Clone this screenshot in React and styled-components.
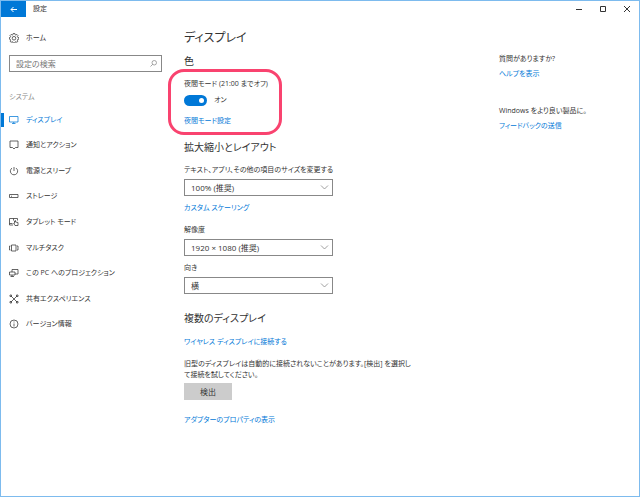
import React, { useState } from 'react';
import styled, { createGlobalStyle } from 'styled-components';

const GlobalStyle = createGlobalStyle`
  * {
    box-sizing: border-box;
  }

  body {
    margin: 0;
    background: #fff;
    color: #333;
    font-family: "Open Sans", "Noto Sans CJK JP", sans-serif;
    font-size: 7px;
    line-height: 12px;
    font-feature-settings: "palt";
  }

  button,
  input,
  select {
    margin: 0;
    font: inherit;
    font-feature-settings: inherit;
    color: inherit;
  }
`;

// === Window frame ===
const Window = styled.div`
  display: flex;
  flex-direction: column;
  min-height: 100vh;
  border: 1px solid #7dbbee;
`;

const TitleBar = styled.header`
  display: flex;
  align-items: center;
  height: 16px;
`;

const BackButton = styled.button`
  display: flex;
  align-items: center;
  justify-content: center;
  width: 25px;
  height: 16px;
  padding: 0;
  border: none;
  background: #0078d7;
  color: #fff;
`;

const WindowTitle = styled.span`
  flex: 1;
  padding-left: 7px;
`;

const WindowButton = styled.button`
  display: flex;
  align-items: center;
  justify-content: center;
  width: 24px;
  height: 16px;
  padding: 0;
  border: none;
  background: none;
`;

const Body = styled.div`
  flex: 1;
  display: grid;
  grid-template-columns: 161px minmax(0, 1fr) 140px;
`;

// === Sidebar ===
const Sidebar = styled.nav`
  padding-top: 14px;
`;

const NavLink = styled.a`
  display: flex;
  align-items: center;
  gap: 7px;
  min-height: 14px;
  padding-left: 7px;
  border-left: 3px solid ${({ $active }) => ($active ? '#0078d7' : 'transparent')};
  color: ${({ $active }) => ($active ? '#0078d7' : '#333')};
  text-decoration: none;

  svg {
    flex: none;
    margin-left: -2px;
  }
`;

const NavList = styled.ul`
  display: grid;
  grid-auto-rows: 1fr;
  align-items: center;
  height: 230px;
  margin: 4px 0 0;
  padding: 0;
  list-style: none;
`;

const SearchBox = styled.label`
  display: flex;
  align-items: center;
  height: 17px;
  margin: 10px 0 0 8px;
  padding: 0 4px 0 6px;
  border: 1px solid #888;
  color: #888;
`;

const SearchInput = styled.input`
  flex: 1;
  min-width: 0;
  padding: 0;
  border: none;
  outline: none;
  background: none;
  font-size: 8px;

  &::placeholder {
    color: #777;
    opacity: 1;
  }
`;

const GroupTitle = styled.div`
  margin: 19px 0 0 8px;
  color: #888;
`;

// === Content ===
const Main = styled.main`
  padding: 10px 83px 20px 22px;
`;

const PageTitle = styled.h1`
  margin: 0;
  font-size: 12px;
  font-weight: 400;
  line-height: 22px;
`;

const SectionTitle = styled.h2`
  margin: ${({ $top }) => $top}px 0 0;
  font-size: 10px;
  font-weight: 400;
  line-height: 16px;
`;

const NightMode = styled.div`
  position: relative;
  width: fit-content;
  margin-top: 9px;
`;

const Marker = styled.div`
  position: absolute;
  inset: -9px -14px -8px -16px;
  border: 3px solid #f9436f;
  border-radius: 16px;
  pointer-events: none;
`;

const SwitchRow = styled.label`
  display: flex;
  align-items: center;
  gap: 7px;
  height: 12px;
  margin-top: 4px;
`;

const Switch = styled.input`
  appearance: none;
  display: flex;
  align-items: center;
  justify-content: ${({ checked }) => (checked ? 'flex-end' : 'flex-start')};
  width: 23px;
  height: 11px;
  padding: 0 3px;
  border-radius: 6px;
  background: ${({ checked }) => (checked ? '#0078d7' : '#999')};

  &::after {
    content: "";
    width: 5px;
    height: 5px;
    border-radius: 50%;
    background: #fff;
  }
`;

const TextLink = styled.a`
  display: block;
  width: fit-content;
  margin-top: ${({ $top }) => $top}px;
  color: #0078d7;
  text-decoration: none;
`;

const Label = styled.label`
  display: block;
  margin-top: ${({ $top }) => $top || 0}px;
`;

const SelectWrap = styled.div`
  position: relative;
  width: 149px;
  margin-top: 3px;

  svg {
    position: absolute;
    top: 4px;
    right: 4px;
    pointer-events: none;
  }
`;

const Select = styled.select`
  appearance: none;
  display: block;
  width: 100%;
  height: 17px;
  padding: 0 16px 0 6px;
  border: 1px solid #888;
  border-radius: 0;
  background: #fff;
  font-size: 8px;
`;

const Paragraph = styled.p`
  margin: 10px 0 0;
  line-height: 11px;
`;

const DetectButton = styled.button`
  display: block;
  width: 48px;
  height: 17px;
  margin-top: 3px;
  padding: 0;
  border: none;
  background: #ccc;
  font-size: 8px;
`;

// === Help column ===
const Aside = styled.aside`
  padding-top: 36px;
`;

const HelpBlock = styled.section`
  margin-bottom: 25px;
`;

const Icon = ({ size = 10, children }) => (
  <svg
    width={size}
    height={size}
    viewBox="0 0 20 20"
    fill="none"
    stroke="currentColor"
    strokeWidth="1.5"
    aria-hidden="true"
  >
    {children}
  </svg>
);

const icons = {
  home: (
    <>
      <path d="M8.4 1h3.2l.5 2.4 1.6.7 2-1.3 2.3 2.3-1.3 2 .7 1.5 2.4.5v3.2l-2.4.5-.7 1.6 1.3 2-2.3 2.2-2-1.3-1.6.7-.5 2.4H8.4l-.5-2.4-1.6-.7-2 1.3L2 16.4l1.3-2-.7-1.6L.8 12.3V9.1l1.800-.5.7-1.500L2 5.100l2.300-2.300 2 1.300 1.600-.7z" />
      <circle cx="10" cy="10.500" r="3.600" />
    </>
  ),
  display: <path d="M1 3h17v11H1zM9.500 14v3M6 17h7" />,
  notify: <path d="M2 2h16v13h-5l-3 3-3-3H2z" />,
  power: <path d="M10 2v8M6 4.200a7.300 7.300 0 1 0 8 0" />,
  storage: <path d="M1 7h17v6H1zM4 10.500h2" />,
  tablet: (
    <>
      <path d="M8 16H1V3h16v4M1 13h6M9 3v4" />
      <path d="M9 12l3 5h6v-6l-5-1V7l-2 1v5" />
    </>
  ),
  multitask: <path d="M5 4h9v12H5zM3 6H1v8h2M16 6h2v8h-2" />,
  project: <path d="M6 8V3h12v9h-6M1 8h11v6H1zM6 14v3M3 17h7" />,
  share: (
    <>
      <path d="M4 4l12 12M16 4L4 16" />
      <path d="M2 2h3v3H2zM15 2h3v3h-3zM2 15h3v3H2zM15 15h3v3h-3z" />
    </>
  ),
  info: (
    <>
      <circle cx="10" cy="10" r="8" />
      <path d="M10 9v6M10 5v2" />
    </>
  ),
};

const navItems = [
  ['display', 'ディスプレイ'],
  ['notify', '通知とアクション'],
  ['power', '電源とスリープ'],
  ['storage', 'ストレージ'],
  ['tablet', 'タブレット モード'],
  ['multitask', 'マルチタスク'],
  ['project', 'この PC へのプロジェクション'],
  ['share', '共有エクスペリエンス'],
  ['info', 'バージョン情報'],
];

const Dropdown = ({ id, label, top, value }) => (
  <>
    <Label htmlFor={id} $top={top}>{label}</Label>
    <SelectWrap>
      <Select id={id} defaultValue={value}>
        <option>{value}</option>
      </Select>
      <svg width="9" height="9" viewBox="0 0 18 18" fill="none" stroke="#888" strokeWidth="1.6">
        <path d="M2 5l7 7 7-7" />
      </svg>
    </SelectWrap>
  </>
);

const App = () => {
  const [active, setActive] = useState('display');
  const [night, setNight] = useState(true);

  return (
    <>
      <GlobalStyle />
      <Window>
        <TitleBar>
          <BackButton aria-label="戻る">
            <svg width="7" height="7" viewBox="0 0 14 14" fill="none" stroke="currentColor" strokeWidth="2">
              <path d="M14 7H2M7 2L2 7l5 5" />
            </svg>
          </BackButton>
          <WindowTitle>設定</WindowTitle>
          <WindowButton aria-label="最小化">
            <svg width="6" height="6" viewBox="0 0 6 6" stroke="#333">
              <path d="M0 3.500h6" />
            </svg>
          </WindowButton>
          <WindowButton aria-label="最大化">
            <svg width="6" height="6" viewBox="0 0 6 6" fill="none" stroke="#333">
              <path d="M.5.5h5v5h-5z" />
            </svg>
          </WindowButton>
          <WindowButton aria-label="閉じる">
            <svg width="6" height="6" viewBox="0 0 6 6" stroke="#333">
              <path d="M0 0l6 6M6 0L0 6" />
            </svg>
          </WindowButton>
        </TitleBar>

        <Body>
          {/* Sidebar */}
          <Sidebar>
            <NavLink href="#home">
              <Icon>{icons.home}</Icon>
              ホーム
            </NavLink>
            <SearchBox>
              <SearchInput type="text" placeholder="設定の検索" aria-label="設定の検索" />
              <svg width="7" height="7" viewBox="0 0 14 14" fill="none" stroke="currentColor" strokeWidth="1.500">
                <circle cx="8.500" cy="5.500" r="4.500" />
                <path d="M5.500 8.500L1 13" />
              </svg>
            </SearchBox>
            <GroupTitle>システム</GroupTitle>
            <NavList>
              {navItems.map(([key, label]) => (
                <li key={key}>
                  <NavLink href={`#${key}`} $active={active === key} onClick={() => setActive(key)}>
                    <Icon>{icons[key]}</Icon>
                    {label}
                  </NavLink>
                </li>
              ))}
            </NavList>
          </Sidebar>

          {/* Content */}
          <Main>
            <PageTitle>ディスプレイ</PageTitle>
            <SectionTitle $top={4}>色</SectionTitle>
            <NightMode>
              <Label htmlFor="night">夜間モード (21:00 までオフ)</Label>
              <SwitchRow>
                <Switch
                  id="night"
                  type="checkbox"
                  role="switch"
                  checked={night}
                  onChange={() => setNight(!night)}
                />
                {night ? 'オン' : 'オフ'}
              </SwitchRow>
              <TextLink href="#night" $top={9}>夜間モード設定</TextLink>
              <Marker />
            </NightMode>

            <SectionTitle $top={12}>拡大縮小とレイアウト</SectionTitle>
            <Dropdown
              id="scale"
              label="テキスト、アプリ、その他の項目のサイズを変更する"
              top={9}
              value="100% (推奨)"
            />
            <TextLink href="#scaling" $top={6}>カスタム スケーリング</TextLink>
            <Dropdown id="resolution" label="解像度" top={10} value="1920 × 1080 (推奨)" />
            <Dropdown id="orientation" label="向き" top={6} value="横" />

            <SectionTitle $top={16}>複数のディスプレイ</SectionTitle>
            <TextLink href="#wireless" $top={10}>ワイヤレス ディスプレイに接続する</TextLink>
            <Paragraph>
              旧型のディスプレイは自動的に接続されないことがあります。[検出] を選択して接続を試してください。
            </Paragraph>
            <DetectButton>検出</DetectButton>
            <TextLink href="#adapter" $top={14}>アダプターのプロパティの表示</TextLink>
          </Main>

          {/* Help */}
          <Aside>
            <HelpBlock>
              質問がありますか?
              <TextLink href="#help" $top={3}>ヘルプを表示</TextLink>
            </HelpBlock>
            <HelpBlock>
              Windows をより良い製品に。
              <TextLink href="#feedback" $top={3}>フィードバックの送信</TextLink>
            </HelpBlock>
          </Aside>
        </Body>
      </Window>
    </>
  );
};

export default App;
